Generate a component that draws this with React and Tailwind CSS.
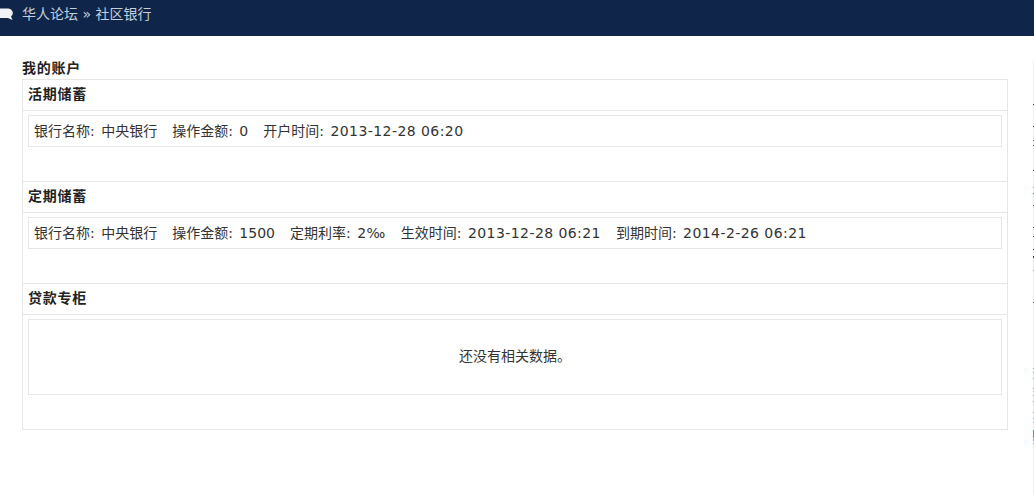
import React from "react";

const sans = "font-['DejaVu_Sans','Noto_Sans_CJK_SC',sans-serif]";

// точки у правого края
const specks = [
  [104, 1, "#333"], [126, 1, "#333"], [140, 1, "#555"], [145, 1, "#444"], [170, 1, "#333"],
  [187, 1, "#e39aa5"], [193, 1, "#b5525f"], [205, 1, "#444"], [227, 1, "#444"], [236, 1, "#444"],
  [249, 1, "#333"], [256, 2, "#333"], [270, 1, "#a59a70"], [302, 1, "#555"],
  [368, 1, "#6fb0c0"], [372, 1, "#8cc0cc"], [378, 1, "#8cc0cc"], [388, 1, "#7ab6c4"], [391, 1, "#8cc0cc"],
  [395, 1, "#8cc0cc"], [401, 1, "#7ab6c4"], [412, 1, "#8cc0cc"], [418, 1, "#7ab6c4"], [422, 1, "#8cc0cc"],
  [430, 8, "#4f9fb0"], [439, 2, "#6fb0c0"], [443, 1, "#8cc0cc"],
];

const Section = ({ title, children }) => (
  <div className="border-b border-[#e6e6e6] last:border-b-0">
    <h2 className="h-[31px] pl-[5px] border-b border-[#e6e6e6] text-sm leading-[29px] font-bold tracking-[0.75px] text-[#222]">{title}</h2>
    <div className="px-[5px] pt-1 pb-[34px]">{children}</div>
  </div>
);

const Field = ({ label, value, spaced }) => (
  <span className="whitespace-nowrap">
    <span className="mr-[2px]">{label}: </span>
    <span className={spaced ? "tracking-[0.43px]" : ""}>{value}</span>
  </span>
);

const Row = ({ children }) => (
  <div className="h-8 pl-[5px] border border-[#e6e6e6] flex gap-[15px] text-sm leading-[30px] text-[#333]">
    {children}
  </div>
);

export default function App() {
  return (
    <div className={`${sans} relative w-[1034px] h-[495px] bg-white overflow-hidden`}>
      <div className="h-9 bg-[#0f2549] flex items-start text-sm leading-[29px] text-[#c4cfdd]">
        <svg width="13" height="13" viewBox="0 0 13 13" className="mt-[8px] shrink-0">
          <path d="M-2 .5h9.500a4.500 4.500 0 0 1 3.500 8l1.500 3.500-4.500-2h-10z" fill="#f1f3f6" />
        </svg>
        <span className="ml-[9px]">华人论坛 » 社区银行</span>
      </div>

      <div className="pl-[22px] w-[1008px] pt-[22px]">
        <h1 className="text-sm leading-[21px] font-bold tracking-[0.75px] text-[#222]">我的账户</h1>
        <div className="border border-[#e6e6e6]">
          <Section title="活期储蓄">
            <Row>
              <Field label="银行名称" value="中央银行" />
              <Field label="操作金额" value="0" />
              <Field label="开户时间" value="2013-12-28 06:20" spaced />
            </Row>
          </Section>
          <Section title="定期储蓄">
            <Row>
              <Field label="银行名称" value="中央银行" />
              <Field label="操作金额" value="1500" />
              <Field label="定期利率" value="2‰" spaced />
              <Field label="生效时间" value="2013-12-28 06:21" spaced />
              <Field label="到期时间" value="2014-2-26 06:21" spaced />
            </Row>
          </Section>
          <Section title="贷款专柜">
            <div className="h-[76px] pb-[2px] border border-[#e6e6e6] flex items-center justify-center text-sm text-[#333]">还没有相关数据。</div>
          </Section>
        </div>
      </div>

      {/* край соседнего окна */}
      <div className="absolute right-0 top-[60px] bottom-0 w-px bg-[#e9eff2]" />
      {specks.map(([y, h, color]) => (
        <div key={y} className="absolute right-0 w-px" style={{ top: y, height: h, backgroundColor: color }} />
      ))}
    </div>
  );
}
